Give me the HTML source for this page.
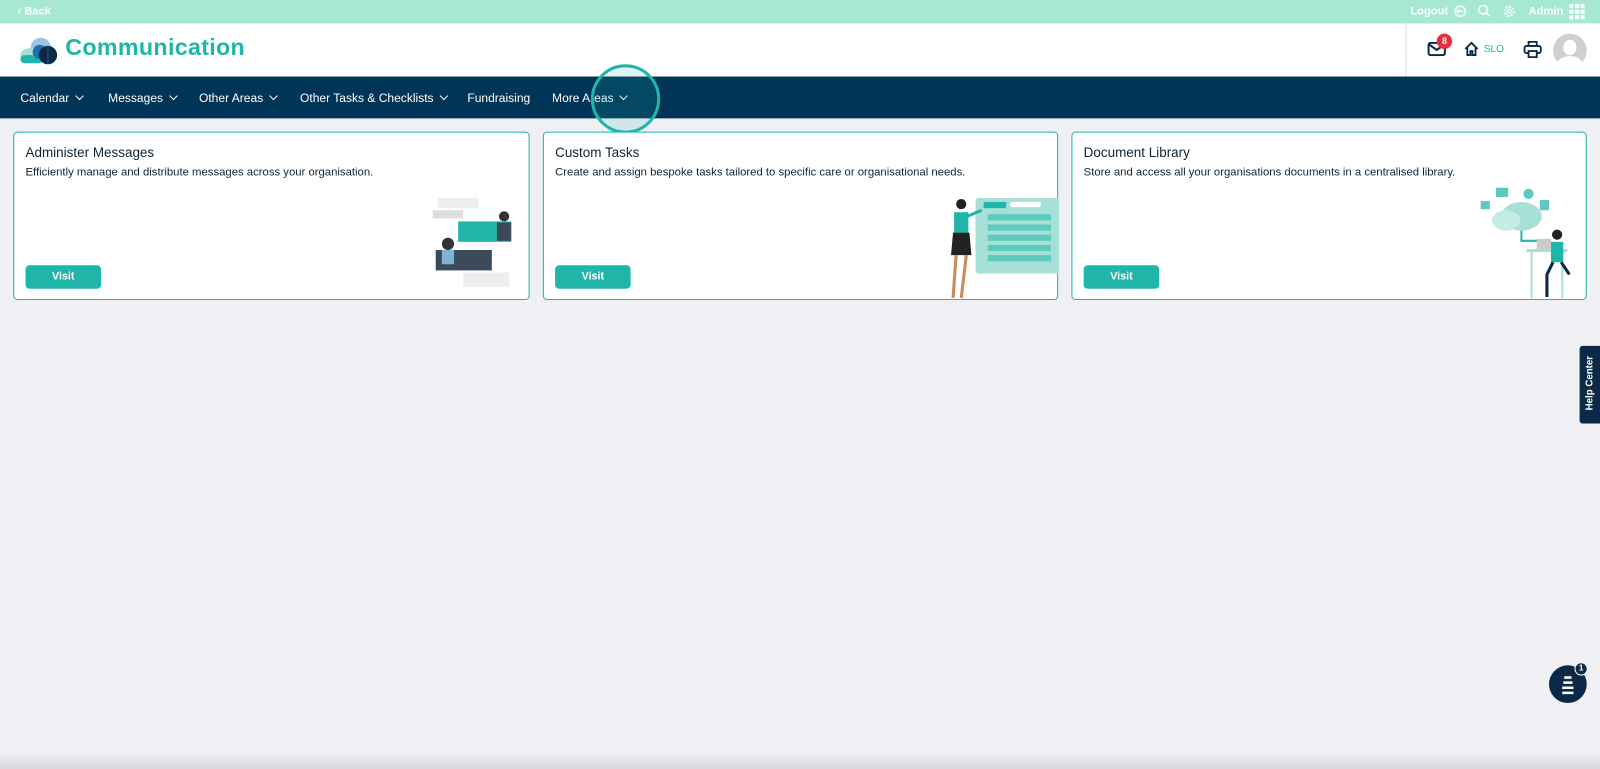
<!DOCTYPE html>
<html><head><meta charset="utf-8"><style>
*{box-sizing:border-box;margin:0;padding:0}
html,body{width:1600px;height:769px;overflow:hidden;background:#efeff4;font-family:"Liberation Sans",sans-serif}
#w{position:absolute;left:0;top:0;width:1568px;height:754px;transform:scale(1.020408);transform-origin:0 0}
.top{position:absolute;left:0;top:0;width:1568px;height:23px;background:#a6e8d3;color:#fff;font-size:11px;font-weight:bold}
.a{position:absolute}
.hdr{position:absolute;left:0;top:23px;width:1568px;height:52px;background:#fff}
.title{position:absolute;left:64px;top:10px;font-size:22.8px;font-weight:bold;color:#1fb5a8;letter-spacing:.3px}
.nav{position:absolute;left:0;top:75px;width:1568px;height:41px;background:#003557;color:#fff;font-size:11.8px}
.nav span{position:absolute;top:14px;white-space:nowrap}
.nav span i{display:inline-block;width:6px;height:6px;border-right:1.6px solid #fff;border-bottom:1.6px solid #fff;transform:rotate(45deg);margin-left:7px;position:relative;top:-3px}
.card{position:absolute;top:129px;height:165px;background:#fff;border:1px solid #1fb5a8;border-radius:4px}
.card h3{position:absolute;left:11px;top:12px;font-size:13.2px;font-weight:normal;color:#0c2438}
.card p{position:absolute;left:11px;top:33px;font-size:11.1px;color:#0c2438;white-space:nowrap}
.btn{position:absolute;left:11px;top:130px;width:74px;height:23px;background:#1fb5a8;color:#fff;font-size:10.5px;font-weight:bold;text-align:center;line-height:23px;border-radius:4px}
</style></head><body><div id="w">
<div class="top"><span class="a" style="left:17px;top:5px">‹ Back</span>
<span class="a" style="left:1382px;top:5px">Logout</span>
<svg class="a" style="left:1424px;top:4px" width="14" height="14"><circle cx="7" cy="7" r="5" fill="none" stroke="#fff" stroke-width="1.5"/><path d="M10 7H4M6 5L4 7L6 9" fill="none" stroke="#fff" stroke-width="1.4"/></svg>
<svg class="a" style="left:1448px;top:4px" width="13" height="13"><circle cx="5.5" cy="5.5" r="4.2" fill="none" stroke="#fff" stroke-width="1.5"/><path d="M8.5 8.5L12 12" stroke="#fff" stroke-width="1.5"/></svg>
<svg class="a" style="left:1472px;top:4px" width="14" height="14"><circle cx="7" cy="7" r="4.5" fill="none" stroke="#fff" stroke-width="2" stroke-dasharray="2 1.5"/><circle cx="7" cy="7" r="1.8" fill="none" stroke="#fff" stroke-width="1.3"/></svg>
<span class="a" style="left:1498px;top:5px">Admin</span>
<svg class="a" style="left:1538px;top:4px" width="15" height="15" fill="#fff"><rect x="0" y="0" width="4" height="4"/><rect x="5.5" y="0" width="4" height="4"/><rect x="11" y="0" width="4" height="4"/><rect x="0" y="5.5" width="4" height="4"/><rect x="5.5" y="5.5" width="4" height="4"/><rect x="11" y="5.5" width="4" height="4"/><rect x="0" y="11" width="4" height="4"/><rect x="5.5" y="11" width="4" height="4"/><rect x="11" y="11" width="4" height="4"/></svg></div>
<div class="hdr">
<svg class="a" style="left:19px;top:12px" width="40" height="30"><circle cx="21" cy="12" r="10" fill="#9ec3e3"/><ellipse cx="12" cy="19" rx="11" ry="7" fill="#a6e0d6"/><rect x="1" y="19" width="22" height="8" rx="4" fill="#1fb5a8"/><circle cx="20" cy="16" r="7" fill="#1f6fb0"/><circle cx="28" cy="19" r="9" fill="#0c2a48"/><line x1="28" y1="10" x2="28" y2="28" stroke="#2a5a80" stroke-width="1"/></svg>
<div class="title">Communication</div>
<div class="a" style="left:1377px;top:0;width:2px;height:52px;background:#eee"></div>
<svg class="a" style="left:1399px;top:18px" width="18" height="14"><rect x="1" y="1" width="16" height="12" rx="2" fill="none" stroke="#0c2a48" stroke-width="2"/><path d="M1.5 2.5L9 8L16.5 2.5" fill="none" stroke="#0c2a48" stroke-width="2"/></svg>
<div class="a" style="left:1408px;top:10px;width:15px;height:15px;border-radius:50%;background:#ee2b3b;color:#fff;font-size:9px;text-align:center;line-height:15px;font-weight:bold">8</div>
<svg class="a" style="left:1434px;top:17px" width="16" height="16"><path d="M2 8L8 2L14 8M4 6.5V14H7V10H9V14H12V6.5" fill="none" stroke="#0c2a48" stroke-width="1.8"/></svg>
<span class="a" style="left:1454px;top:20px;font-size:10px;color:#1fb5a8">SLO</span>
<svg class="a" style="left:1493px;top:17px" width="18" height="17"><rect x="5" y="1" width="8" height="4" fill="none" stroke="#0c2a48" stroke-width="1.8"/><rect x="1" y="5" width="16" height="7" rx="2" fill="none" stroke="#0c2a48" stroke-width="1.8"/><rect x="5" y="10" width="8" height="6" fill="#fff" stroke="#0c2a48" stroke-width="1.8"/></svg>
<div class="a" style="left:1522px;top:10px;width:33px;height:33px;border-radius:50%;background:#cfcfcf;overflow:hidden"><div class="a" style="left:10px;top:6px;width:13px;height:15px;border-radius:50%;background:#fff"></div><div class="a" style="left:4px;top:22px;width:25px;height:16px;border-radius:50%;background:#fff"></div></div>
</div>
<div class="nav"><span style="left:20px">Calendar<i></i></span><span style="left:106px">Messages<i></i></span><span style="left:195px">Other Areas<i></i></span><span style="left:294px">Other Tasks &amp; Checklists<i></i></span><span style="left:458px">Fundraising</span><span style="left:541px">More Areas<i></i></span></div>
<div class="a" style="left:579px;top:63px;width:68px;height:68px;border-radius:50%;border:3px solid #1fb5a8;background:rgba(31,181,168,.15)"></div>

<div class="card" style="left:13px;width:506px"><h3>Administer Messages</h3><p>Efficiently manage and distribute messages across your organisation.</p><div class="btn">Visit</div>
<svg class="a" style="left:405px;top:62px" width="95" height="92"><rect x="10" y="2" width="40" height="10" fill="#eee"/><rect x="5" y="14" width="30" height="8" fill="#ddd"/><rect x="30" y="25" width="52" height="20" fill="#1fb5a8"/><circle cx="75" cy="20" r="5" fill="#333"/><rect x="68" y="26" width="14" height="18" fill="#3a4a58"/><rect x="8" y="53" width="55" height="20" fill="#3a4a58"/><circle cx="20" cy="47" r="6" fill="#333"/><rect x="14" y="53" width="12" height="14" fill="#7fb3d5"/><rect x="35" y="75" width="45" height="14" fill="#eee"/></svg></div>

<div class="card" style="left:532px;width:505px"><h3>Custom Tasks</h3><p>Create and assign bespoke tasks tailored to specific care or organisational needs.</p><div class="btn">Visit</div>
<svg class="a" style="left:385px;top:60px" width="120" height="104"><rect x="38" y="4" width="82" height="74" rx="3" fill="#a6e0d6"/><rect x="46" y="8" width="22" height="6" fill="#1fb5a8"/><rect x="72" y="8" width="30" height="5" rx="2" fill="#fff"/><g fill="#5ccabf"><rect x="50" y="20" width="62" height="6"/><rect x="50" y="30" width="62" height="6"/><rect x="50" y="40" width="62" height="6"/><rect x="50" y="50" width="62" height="6"/><rect x="50" y="60" width="62" height="6"/></g><circle cx="24" cy="10" r="5" fill="#222"/><rect x="17" y="18" width="14" height="20" fill="#1fb5a8"/><path d="M16 38h16l2 22H14z" fill="#222"/><path d="M19 60l-3 42M29 60l-5 42" stroke="#c98a5c" stroke-width="3"/><path d="M30 22L44 16" stroke="#1fb5a8" stroke-width="3"/></svg></div>

<div class="card" style="left:1050px;width:505px"><h3>Document Library</h3><p>Store and access all your organisations documents in a centralised library.</p><div class="btn">Visit</div>
<svg class="a" style="left:395px;top:52px" width="110" height="112"><ellipse cx="45" cy="30" rx="20" ry="14" fill="#a6e0d6"/><ellipse cx="30" cy="34" rx="14" ry="10" fill="#c5ece4"/><rect x="20" y="2" width="12" height="9" fill="#5ccabf"/><circle cx="52" cy="8" r="5" fill="#5ccabf"/><rect x="63" y="14" width="9" height="10" fill="#5ccabf"/><rect x="5" y="15" width="9" height="8" fill="#5ccabf"/><path d="M45 44v10h25" fill="none" stroke="#1fb5a8" stroke-width="2"/><rect x="50" y="62" width="40" height="3" fill="#a6e0d6"/><path d="M55 65v45M85 65v45" stroke="#a6e0d6" stroke-width="2"/><circle cx="80" cy="48" r="5" fill="#222"/><rect x="74" y="55" width="12" height="20" fill="#1fb5a8"/><path d="M76 75l-6 12v22M84 75l8 12" stroke="#0c2a48" stroke-width="3" fill="none"/><rect x="60" y="52" width="14" height="10" fill="#ccc"/></svg></div>

<div class="a" style="left:1548px;top:339px;width:20px;height:76px;background:#0c2a48;border-radius:3px 0 0 3px"><div class="a" style="left:-28px;top:31px;width:76px;text-align:center;transform:rotate(-90deg);color:#fff;font-size:9.5px;font-weight:bold">Help Center</div></div>
<div class="a" style="left:1518px;top:652px;width:37px;height:37px;border-radius:50%;background:#0c2a48"><svg width="37" height="37"><path d="M15 12h7M14 17h9M13 22h11M13 27h11" stroke="#fff" stroke-width="2.5"/></svg></div>
<div class="a" style="left:1543px;top:649px;width:13px;height:13px;border-radius:50%;background:#0c2a48;border:1.5px solid #fff;color:#fff;font-size:8px;text-align:center;line-height:10px;font-weight:bold">1</div>
<div class="a" style="left:0;top:738px;width:1568px;height:16px;background:linear-gradient(#efeff4,#d8d8dc)"></div>
</div></body></html>
